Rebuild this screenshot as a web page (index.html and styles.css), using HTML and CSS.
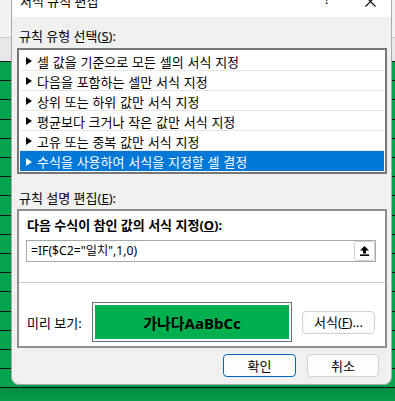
FILE: index.html
```html
<!DOCTYPE html>
<html lang="ko">
<head>
<meta charset="utf-8">
<title>서식 규칙 편집</title>
<link rel="stylesheet" href="styles.css">
</head>
<body>
<div class="dialog">
  <div class="titlebar">
    <span class="title">서식 규칙 편집</span>
    <span class="help">?</span>
    <span class="close"><svg width="11" height="11" viewBox="0 0 11 11"><path d="M0.5 0.5 L10.5 10.5 M10.5 0.5 L0.5 10.5" stroke="#000" stroke-width="1.1" fill="none"/></svg></span>
  </div>
  <div class="content">
    <div class="label">규칙 유형 선택(<u>S</u>):</div>
    <ul class="list">
      <li class="item"><svg class="tri" width="6" height="8" viewBox="0 0 6 8"><path d="M0 0 L6 4 L0 8 Z"/></svg>셀 값을 기준으로 모든 셀의 서식 지정</li>
      <li class="item"><svg class="tri" width="6" height="8" viewBox="0 0 6 8"><path d="M0 0 L6 4 L0 8 Z"/></svg>다음을 포함하는 셀만 서식 지정</li>
      <li class="item"><svg class="tri" width="6" height="8" viewBox="0 0 6 8"><path d="M0 0 L6 4 L0 8 Z"/></svg>상위 또는 하위 값만 서식 지정</li>
      <li class="item"><svg class="tri" width="6" height="8" viewBox="0 0 6 8"><path d="M0 0 L6 4 L0 8 Z"/></svg>평균보다 크거나 작은 값만 서식 지정</li>
      <li class="item"><svg class="tri" width="6" height="8" viewBox="0 0 6 8"><path d="M0 0 L6 4 L0 8 Z"/></svg>고유 또는 중복 값만 서식 지정</li>
      <li class="item selected"><svg class="tri" width="6" height="8" viewBox="0 0 6 8"><path d="M0 0 L6 4 L0 8 Z"/></svg>수식을 사용하여 서식을 지정할 셀 결정</li>
    </ul>
    <div class="label label2">규칙 설명 편집(<u>E</u>):</div>
    <div class="panel">
      <div class="panel-top">
        <div class="bold-label">다음 수식이 참인 값의 서식 지정(<u>O</u>):</div>
        <div class="formula">
          <span class="formula-text">=IF($C2="일치",1,0)</span>
          <span class="collapse"><svg width="9" height="10" viewBox="0 0 9 10"><path d="M4.5 0 L9 4.6 H6 V7.4 H3 V4.6 H0 Z" fill="#000"/><rect x="0" y="8.4" width="9" height="1.6" fill="#000"/></svg></span>
        </div>
      </div>
      <div class="panel-bottom">
        <span class="preview-label">미리 보기:</span>
        <div class="preview"><div class="preview-fill">가나다AaBbCc</div></div>
        <span class="btn fmt">서식(<u>F</u>)...</span>
      </div>
    </div>
    <div class="actions">
      <span class="btn primary">확인</span>
      <span class="btn cancel">취소</span>
    </div>
  </div>
</div>
</body>
</html>
```
FILE: styles.css
```css
html, body {
  margin: 0;
  padding: 0;
}
body {
  width: 395px;
  height: 401px;
  overflow: hidden;
  font-family: "Noto Sans", "Noto Sans CJK KR", sans-serif;
  font-size: 13px;
  color: #000;
  background:
    linear-gradient(to bottom, #f2f2f2 0 37px, #cdcdcd 37px 38px, #e7e7e7 38px 61px, transparent 61px),
    linear-gradient(to bottom, transparent 386px, rgba(0,40,10,0.18) 388px, rgba(0,40,10,0.05) 401px),
    repeating-linear-gradient(to bottom, #141414 0 1px, transparent 1px 19.2px) 0 61px,
    #04a24e;
}
.dialog {
  margin-left: 11px;
  width: 381px;
  height: 385px;
  box-sizing: border-box;
  background: #f0f0f0;
  border: 1px solid #a9a9a9;
  border-top: 0;
  border-radius: 0 0 8px 8px;
  display: flex;
  flex-direction: column;
  overflow: hidden;
}
.titlebar {
  height: 17px;
  flex: none;
  background: #fff;
  display: flex;
  align-items: flex-start;
  overflow: hidden;
}
.title {
  flex: 1;
  margin-left: 8px;
  margin-top: -5px;
  font-size: 13px;
  line-height: 12px;
}
.help {
  margin-top: -7px;
  margin-right: 35px;
  font-size: 13px;
  line-height: 13px;
}
.close {
  margin-top: -4px;
  margin-right: 15px;
  display: flex;
}
.content {
  flex: 1;
  padding: 11px 4px 0 5px;
  display: flex;
  flex-direction: column;
}
.label {
  line-height: 16px;
  padding-left: 2px;
}
.list {
  margin: 4px 0 0;
  padding: 1px;
  list-style: none;
  border: 2px solid #777;
  background: #fff;
}
.item {
  height: 20px;
  box-sizing: border-box;
  border-bottom: 1px solid #e6e6e6;
  display: flex;
  align-items: center;
  padding-left: 6px;
  padding-top: 1px;
  white-space: nowrap;
  word-spacing: 0.4px;
}
.item:last-child {
  border-bottom: 0;
}
.tri {
  fill: #000;
  margin-right: 5px;
  flex: none;
}
.item.selected {
  background: #0078d7;
  color: #fff;
}
.item.selected .tri {
  fill: #fff;
}
.label2 {
  margin-top: 16px;
}
.panel {
  margin-top: 3px;
  border: 2px solid #8e8e8e;
  background: #fff;
}
.panel-top {
  padding: 6px 0 20px 7px;
}
.bold-label {
  font-weight: bold;
  line-height: 16px;
  padding-left: 1px;
}
.formula {
  margin-top: 7px;
  width: 350px;
  height: 22px;
  box-sizing: border-box;
  border: 1px solid #a8a8a8;
  display: flex;
  align-items: center;
  justify-content: space-between;
  padding-left: 4px;
}
.formula-text {
  font-size: 12.2px;
  line-height: 16px;
}
.collapse {
  width: 21px;
  height: 20px;
  box-sizing: border-box;
  border: 1px solid #d2d2d2;
  border-radius: 3px;
  background: #fff;
  display: flex;
  align-items: center;
  justify-content: center;
}
.panel-bottom {
  border-top: 1px solid #c9c9c9;
  padding: 19px 0 4px 8px;
  display: flex;
  align-items: center;
}
.preview-label {
  width: 65px;
  flex: none;
}
.preview {
  width: 200px;
  height: 40px;
  box-sizing: border-box;
  border: 1px solid #707070;
  padding: 2px;
  background: #fff;
}
.preview-fill {
  height: 100%;
  background: #00b050;
  display: flex;
  align-items: center;
  justify-content: center;
  font-weight: bold;
  font-size: 15px;
}
.btn {
  height: 23px;
  box-sizing: border-box;
  border: 1px solid #d0d0d0;
  border-radius: 4px;
  background: #fdfdfd;
  display: flex;
  align-items: center;
  justify-content: center;
  line-height: 16px;
}
.fmt {
  margin-left: 10px;
  width: 73px;
}
.actions {
  margin-top: 6px;
  display: flex;
  justify-content: flex-end;
  gap: 11px;
  padding-right: 8px;
}
.primary {
  width: 73px;
  border-color: #0067c0;
}
.cancel {
  width: 72px;
}
```
